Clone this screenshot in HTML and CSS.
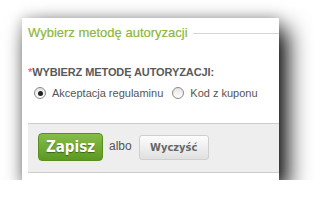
FILE: index.html
```html
<!DOCTYPE html>
<html lang="pl">
<head>
  <meta charset="UTF-8">
  <title>Wybierz metodę autoryzacji</title>
  <link rel="stylesheet" href="styles.css">
</head>
<body>
  <div class="panel">
    <div class="legend">
      <span class="legend-text">Wybierz metodę autoryzacji</span>
      <span class="legend-line"></span>
    </div>
    <div class="field-label"><span class="req">*</span>WYBIERZ METODĘ AUTORYZACJI:</div>
    <div class="radios">
      <label class="radio"><span class="dot checked"></span>Akceptacja regulaminu</label>
      <label class="radio"><span class="dot"></span>Kod z kuponu</label>
    </div>
    <div class="actions">
      <button class="btn-save">Zapisz</button>
      <span class="or">albo</span>
      <button class="btn-clear">Wyczyść</button>
    </div>
  </div>
</body>
</html>
```

FILE: styles.css
```css
body {
  margin: 0;
  background-color: #fff;
  font-family: 'Liberation Sans', Arial, sans-serif;
  color: #555;
}
.panel {
  margin: 18px 0 0 22px;
  width: 257px;
  height: 162px;
  box-sizing: border-box;
  padding-left: 6px;
  background-color: #fff;
  box-shadow: 8px 11px 22px rgba(0, 0, 0, 1), 0 0 12px rgba(0, 0, 0, 0.2);
}
.legend {
  display: flex;
  align-items: center;
  padding-top: 8px;
  height: 14px;
}
.legend-text {
  color: #8bb83c;
  font-size: 13px;
  line-height: 14px;
  -webkit-text-stroke: 0.2px #8bb83c;
}
.legend-line {
  flex: 1;
  height: 1px;
  margin: 1px 0 0 5px;
  background-color: #d4d4d4;
}
.field-label {
  margin-top: 26px;
  font-size: 11px;
  line-height: 13px;
  font-weight: bold;
  letter-spacing: -0.1px;
  color: #595959;
}
.req {
  color: #e8383d;
  font-weight: normal;
}
.radios {
  display: flex;
  gap: 9px;
  margin-top: 7px;
  padding-left: 6px;
  height: 14px;
}
.radio {
  display: flex;
  align-items: center;
  gap: 6px;
  font-size: 11px;
  color: #555;
}
.dot {
  position: relative;
  width: 10px;
  height: 10px;
  border: 1px solid #8a8a8a;
  border-radius: 50%;
  background: linear-gradient(#e4e4e4, #fff);
}
.dot.checked::after {
  content: '';
  position: absolute;
  top: 2.5px;
  left: 2.5px;
  width: 5px;
  height: 5px;
  border-radius: 50%;
  background-color: #222;
}
.actions {
  display: flex;
  align-items: center;
  margin-top: 23px;
  height: 46px;
  padding: 0 0 2px 10px;
  box-sizing: content-box;
  border-top: 1px solid #cdcdcd;
  border-bottom: 1px solid #cdcdcd;
  background-color: #eee;
}
.btn-save {
  width: 65px;
  height: 28px;
  padding: 0;
  border: 1px solid #578e1f;
  border-radius: 4px;
  background: linear-gradient(#86bd48, #5b9922);
  color: #fff;
  font-family: 'DejaVu Sans Condensed', 'DejaVu Sans', sans-serif;
  font-size: 15px;
  font-weight: bold;
  text-shadow: 0 1px 1px rgba(0, 0, 0, 0.4);
}
.or {
  margin: 0 7px 3px 6px;
  font-size: 12px;
  color: #555;
}
.btn-clear {
  width: 70px;
  height: 25px;
  padding: 0;
  border: 1px solid #cfcfcf;
  border-radius: 3px;
  background: linear-gradient(#fdfdfd, #e0e0e0);
  color: #666;
  font-family: 'DejaVu Sans Condensed', 'DejaVu Sans', sans-serif;
  font-size: 11px;
  font-weight: bold;
}
```
